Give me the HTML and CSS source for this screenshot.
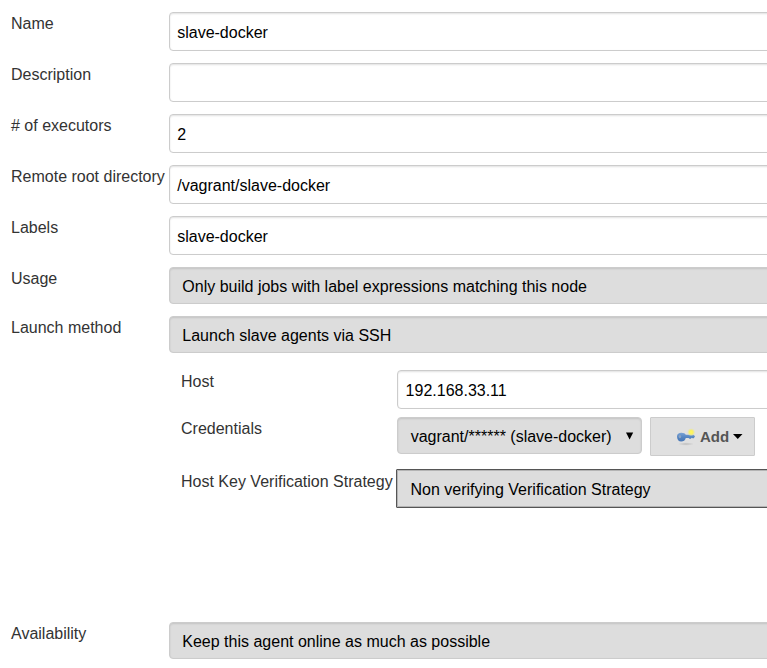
FILE: index.html
```
<!DOCTYPE html>
<html lang="en">
<head>
<meta charset="utf-8">
<title>Node configuration</title>
<link rel="stylesheet" href="styles.css">
</head>
<body>
<main class="form">
  <div class="row"><div class="label">Name</div><div class="input">slave-docker</div></div>
  <div class="row"><div class="label">Description</div><div class="input"></div></div>
  <div class="row"><div class="label"># of executors</div><div class="input">2</div></div>
  <div class="row"><div class="label">Remote root directory</div><div class="input">/vagrant/slave-docker</div></div>
  <div class="row"><div class="label">Labels</div><div class="input">slave-docker</div></div>
  <div class="row"><div class="label">Usage</div><div class="select">Only build jobs with label expressions matching this node</div></div>
  <div class="row"><div class="label">Launch method</div><div class="select">Launch slave agents via SSH</div></div>
  <section class="nested">
    <div class="row host"><div class="label">Host</div><div class="input">192.168.33.11</div></div>
    <div class="row credentials">
      <div class="label">Credentials</div>
      <div class="select fitted"><span>vagrant/****** (slave-docker)</span><svg class="arrow" width="8" height="8" viewBox="0 0 8 8"><path d="M0 0.5H7.2L3.6 7.5Z"/></svg></div>
      <div class="button">
        <svg class="key" width="20" height="18" viewBox="0 0 20 18">
          <defs>
            <linearGradient id="metal" x1="0" y1="0" x2="0" y2="1"><stop offset="0" stop-color="#79a2d4"/><stop offset="0.5" stop-color="#5585c2"/><stop offset="1" stop-color="#4676b5"/></linearGradient>
            <radialGradient id="glow"><stop offset="0" stop-color="#fff95c"/><stop offset="0.5" stop-color="#f8f066"/><stop offset="1" stop-color="#e8e4a8" stop-opacity="0.3"/></radialGradient>
            <radialGradient id="shade"><stop offset="0" stop-color="#bdbdbd"/><stop offset="1" stop-color="#e0e0e0"/></radialGradient>
          </defs>
          <ellipse cx="10" cy="16" rx="8" ry="1.7" fill="url(#shade)"/>
          <path d="M1 8.5C1 6 2.8 4.8 5.3 4.8C7.8 4.8 9.2 5.6 9.8 6.8H17.5L19 8.3L17.8 10.2H16.6L15.7 9.7L14.8 10.8H13.5L12.6 10H9.8C9.2 12.5 7.5 13.5 5.2 13.5C2.7 13.5 1 11.5 1 8.5Z" fill="url(#metal)"/>
          <ellipse cx="3.9" cy="8.6" rx="1.3" ry="1.6" fill="#8ba3c2"/>
          <circle cx="15.2" cy="4.2" r="3.8" fill="url(#glow)"/>
        </svg>
        <span>Add</span>
        <svg class="caret" width="10" height="5" viewBox="0 0 10 5"><path d="M0 0H9.5L4.75 5Z"/></svg>
      </div>
    </div>
    <div class="row strategy"><div class="label">Host Key Verification Strategy</div><div class="select focused">Non verifying Verification Strategy</div></div>
  </section>
  <div class="row"><div class="label">Availability</div><div class="select">Keep this agent online as much as possible</div></div>
</main>
</body>
</html>
```
FILE: styles.css
```
* { box-sizing: border-box; }
body {
  margin: 0;
  background: #fff;
  color: #333;
  font: 16px/18px "Liberation Sans", Arial, sans-serif;
  overflow: hidden;
}
.form {
  width: 787px;
  padding: 12px 0 0 11px;
}
.row {
  display: flex;
  align-items: flex-start;
  margin-bottom: 12px;
}
.label {
  flex: 0 0 158px;
  padding-top: 3px;
  white-space: nowrap;
}
.input, .select {
  flex: 1;
  border: 1px solid #ccc;
  border-radius: 4px;
  color: #000;
  white-space: nowrap;
  box-shadow: inset 0 1px 2px rgba(0, 0, 0, 0.12);
}
.input {
  height: 39px;
  padding: 11px 7.2px 0;
  background: #fff;
}
.select {
  height: 37px;
  padding: 10px 12.3px 0;
  background: #ddd;
}
.nested {
  height: 252px;
  margin-top: 17px;
  padding-left: 170px;
}
.nested .label { flex-basis: 216px; }
.host { margin-bottom: 8px; }
.host .input { padding-left: 7.6px; }
.credentials { margin-bottom: 13px; }
.fitted {
  display: flex;
  justify-content: space-between;
  flex: 0 0 245px;
  padding-left: 12.7px;
  padding-right: 7px;
}
.arrow { margin-top: 4px; }
.button {
  display: flex;
  align-items: center;
  width: 105px;
  height: 39px;
  margin-left: 8px;
  padding-left: 25px;
  border: 1px solid #ccc;
  border-radius: 1px;
  background: #e0e0e0;
  color: #555;
  font-size: 15px;
  font-weight: bold;
}
.key { margin-right: 4px; }
.caret { margin-left: 4px; fill: #000; }
.strategy .label { padding-top: 4px; }
.focused {
  height: 39px;
  margin-left: -1px;
  padding-top: 11px;
  padding-left: 13.5px;
  border-color: #555;
  border-radius: 1px;
  box-shadow: inset 0 0 0 1px #b4b4b4;
}
```
